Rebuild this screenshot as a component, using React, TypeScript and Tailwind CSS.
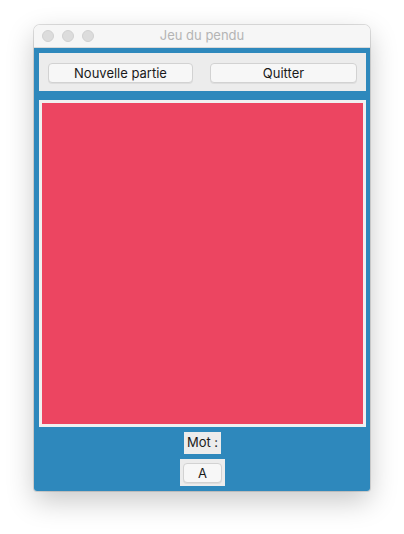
import React from 'react';

const font = { fontFamily: 'Inter, "Liberation Sans", Arial, sans-serif' };

const MacButton = ({ label, className = '' }: { label: string; className?: string }) => (
  <button
    className={`h-[20px] rounded-[4px] border border-[#d2d2d2] bg-[#f7f7f7] text-[13px] leading-none text-[#1a1a1a] shadow-[0_1px_0_rgba(0,0,0,0.06)] ${className}`}
  >
    {label}
  </button>
);

export default function App() {
  return (
    <div className="min-h-[534px] w-[404px] bg-white pl-[34px] pt-[25px]" style={font}>
      <div className="w-[336px] overflow-hidden rounded-t-[6px] rounded-b-[3px] shadow-[0_10px_28px_rgba(0,0,0,0.22),0_0_0_1px_rgba(0,0,0,0.12)]">
        {/* Title bar */}
        <div className="relative flex h-[23px] items-center bg-[#f6f6f6] border-b border-[#d8d8d8]">
          <div className="flex gap-[8px] pl-[8px]">
            <span className="h-[12px] w-[12px] rounded-full bg-[#dcdcdc] border border-[#d0d0d0]" />
            <span className="h-[12px] w-[12px] rounded-full bg-[#dcdcdc] border border-[#d0d0d0]" />
            <span className="h-[12px] w-[12px] rounded-full bg-[#dcdcdc] border border-[#d0d0d0]" />
          </div>
          <span className="absolute inset-x-0 text-center text-[13px] text-[#b4b4b4]">Jeu du pendu</span>
        </div>

        {/* Content */}
        <div className="flex flex-col bg-[#2e88bc] pb-[5px] pl-[5px] pr-[4px] pt-[5px]">
          <div className="flex h-[38px] items-start gap-[17px] bg-[#ececec] px-[9px] pt-[10px]">
            <MacButton label="Nouvelle partie" className="w-[145px]" />
            <MacButton label="Quitter" className="w-[147px]" />
          </div>

          <div className="mt-[9px] h-[327px] border-[3px] border-[#f0f0f0] bg-[#ec4561]" />

          <div className="mt-[5px] flex flex-col items-center gap-[5px]">
            <div className="flex h-[22px] w-[37px] items-center justify-center bg-[#ececec] text-[13px] text-[#1a1a1a]">
              Mot :
            </div>
            <div className="flex h-[27px] w-[45px] items-center justify-center bg-[#ececec] pt-[1px]">
              <MacButton label="A" className="w-[39px]" />
            </div>
          </div>
        </div>
      </div>
    </div>
  );
}
